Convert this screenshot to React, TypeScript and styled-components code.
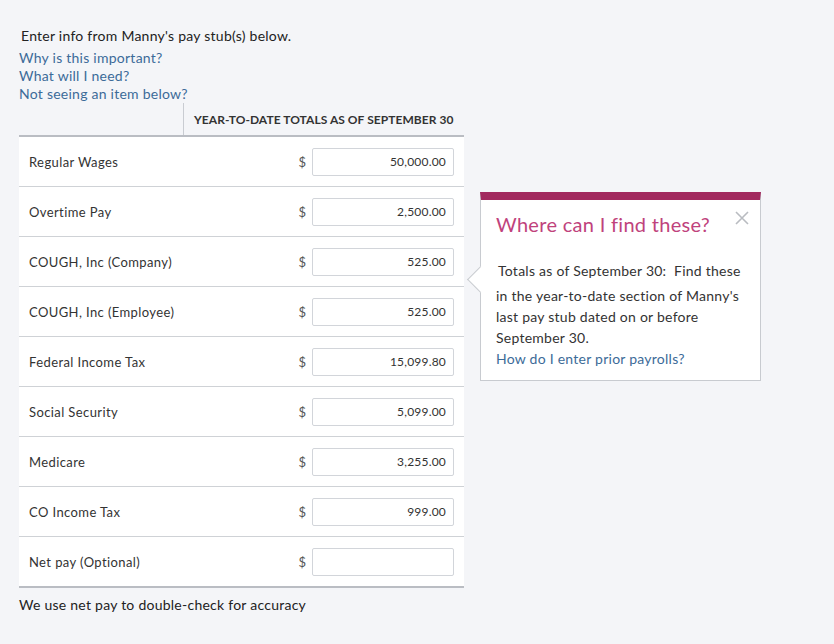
import React from "react";
import styled, { createGlobalStyle } from "styled-components";

const Global = createGlobalStyle`
  html, body { margin: 0; padding: 0; background: #f4f5f8; }
  body { font-family: Lato, "Open Sans", sans-serif; color: #333; }
  * { box-sizing: border-box; }
`;

const Page = styled.div`
  position: relative;
  width: 834px;
  height: 644px;
  padding: 27px 0 0 19px;
`;

const Column = styled.div`
  width: 445px;
  display: flex;
  flex-direction: column;
`;

const Intro = styled.div`
  font-size: 14px;
  line-height: 18px;
  letter-spacing: 0.25px;
  padding-left: 2px;
  margin-bottom: 4px;
  color: #222;
`;

const Links = styled.div`
  display: flex;
  flex-direction: column;
`;

const Link = styled.a`
  font-size: 14px;
  line-height: 18px;
  letter-spacing: 0.25px;
  color: #3c6b98;
  text-decoration: none;
  cursor: pointer;
`;

const Header = styled.div`
  display: grid;
  grid-template-columns: 164px 1fr;
  height: 34px;
  border-bottom: 2px solid #babdc3;
`;

const HeaderCell = styled.div`
  border-left: 1px solid #c9ccd2;
  display: flex;
  align-items: center;
  padding: 0 0 0 10px;
  font-size: 12px;
  font-weight: 700;
  letter-spacing: 0.05px;
  color: #333;
  white-space: nowrap;
`;

const Table = styled.div`
  background: #fff;
  border-bottom: 2px solid #babdc3;
`;

const Row = styled.div`
  display: flex;
  align-items: center;
  height: 50px;
  padding: 0 10px 0 10px;
  border-bottom: 1px solid #cfd2d6;
  &:last-child { border-bottom: none; height: 49px; }
`;

const Label = styled.div`
  flex: 1;
  font-size: 13px;
  color: #333;
  letter-spacing: 0.4px;
`;

const Dollar = styled.span`
  font-size: 13px;
  color: #555;
  margin-right: 6px;
`;

const Amount = styled.input`
  width: 142px;
  height: 28px;
  border: 1px solid #d2d5da;
  border-radius: 2px;
  padding: 0 7px;
  text-align: right;
  font-family: Lato, "Open Sans", sans-serif;
  font-size: 12px;
  letter-spacing: 0.2px;
  color: #333;
  background: #fff;
  outline: none;
`;

const Footnote = styled.div`
  font-size: 14px;
  line-height: 18px;
  letter-spacing: 0.25px;
  margin-top: 8px;
  color: #222;
`;

const Popover = styled.div`
  position: absolute;
  left: 480px;
  top: 192px;
  width: 281px;
  height: 189px;
  background: #fff;
  border: 1px solid #c8cbd0;
  border-top: 8px solid #a2295e;
  padding: 11px 15px 0 15px;
`;

const Arrow = styled.div`
  position: absolute;
  left: -10px;
  top: 70px;
  width: 19px;
  height: 19px;
  background: #fff;
  border-left: 1px solid #c8cbd0;
  border-bottom: 1px solid #c8cbd0;
  transform: rotate(45deg);
`;

const Title = styled.div`
  font-size: 20px;
  line-height: 26px;
  color: #c0427c;
  letter-spacing: 0.3px;
`;

const Close = styled.button`
  position: absolute;
  right: 10px;
  top: 10px;
  width: 16px;
  height: 16px;
  padding: 0;
  border: none;
  background: transparent;
  cursor: pointer;
`;

const Body = styled.div`
  margin-top: 19px;
  font-size: 14px;
  letter-spacing: 0.25px;
  color: #333;
  position: relative;
`;

const Lead = styled.div`
  line-height: 29px;
  padding-left: 2px;
  white-space: pre;
`;

const Rest = styled.div`
  line-height: 21px;
`;

const PopLink = styled.a`
  display: block;
  font-size: 14px;
  line-height: 21px;
  color: #3c6b98;
  cursor: pointer;
`;

const rows: [string, string][] = [
  ["Regular Wages", "50,000.00"],
  ["Overtime Pay", "2,500.00"],
  ["COUGH, Inc (Company)", "525.00"],
  ["COUGH, Inc (Employee)", "525.00"],
  ["Federal Income Tax", "15,099.80"],
  ["Social Security", "5,099.00"],
  ["Medicare", "3,255.00"],
  ["CO Income Tax", "999.00"],
  ["Net pay (Optional)", ""],
];

export default function App() {
  return (
    <>
      <Global />
      <Page>
        <Column>
          <Intro>Enter info from Manny's pay stub(s) below.</Intro>
          <Links>
            <Link>Why is this important?</Link>
            <Link>What will I need?</Link>
            <Link>Not seeing an item below?</Link>
          </Links>
          <Header>
            <div />
            <HeaderCell>YEAR-TO-DATE TOTALS AS OF SEPTEMBER 30</HeaderCell>
          </Header>
          <Table>
            {rows.map(([label, value]) => (
              <Row key={label}>
                <Label>{label}</Label>
                <Dollar>$</Dollar>
                <Amount defaultValue={value} />
              </Row>
            ))}
          </Table>
          <Footnote>We use net pay to double-check for accuracy</Footnote>
        </Column>
        <Popover>
          <Arrow />
          <Title>Where can I find these?</Title>
          <Close aria-label="Close">
            <svg width="16" height="16" viewBox="0 0 16 16">
              <path d="M2 2 L14 14 M14 2 L2 14" stroke="#b9bcc1" strokeWidth="1.6" />
            </svg>
          </Close>
          <Body>
            <Lead>{"Totals as of September 30:  Find these"}</Lead>
            <Rest>
              in the year-to-date section of Manny's
              <br />
              last pay stub dated on or before
              <br />
              September 30.
            </Rest>
            <PopLink>How do I enter prior payrolls?</PopLink>
          </Body>
        </Popover>
      </Page>
    </>
  );
}
